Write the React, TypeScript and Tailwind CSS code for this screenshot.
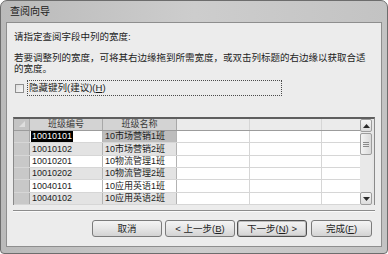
const rows = [
  { code: "10010101", name: "10市场营销1班", h: "h-[12px]", c1: "bg-white", c2: "bg-[#bdbdbd]", sel: true },
  { code: "10010102", name: "10市场营销2班", h: "h-[13px]", c1: "bg-[#e3e3e3]", c2: "bg-[#e3e3e3]", sel: false },
  { code: "10010201", name: "10物流管理1班", h: "h-[12px]", c1: "bg-white", c2: "bg-white", sel: false },
  { code: "10010202", name: "10物流管理2班", h: "h-[12px]", c1: "bg-[#e3e3e3]", c2: "bg-[#e3e3e3]", sel: false },
  { code: "10040101", name: "10应用英语1班", h: "h-[13px]", c1: "bg-white", c2: "bg-white", sel: false },
  { code: "10040102", name: "10应用英语2班", h: "h-[12px]", c1: "bg-[#e3e3e3]", c2: "bg-[#e3e3e3]", sel: false },
];

function Arrow({ up }: { up: boolean }) {
  return (
    <svg width="7" height="4" viewBox="0 0 7 4">
      <path d={up ? "M0 4 L3.5 0 L7 4 Z" : "M0 0 L3.5 4 L7 0 Z"} fill="#2a2a2a" />
    </svg>
  );
}

function Btn({ children, w, focus }: { children: React.ReactNode; w: string; focus?: boolean }) {
  return (
    <div
      className={`flex h-[17px] ${w} items-center justify-center rounded-[3px] border bg-gradient-to-b from-[#f4f4f4] via-[#e6e6e6] to-[#d3d3d3] text-[9.5px] leading-none text-[#1e1e1e] ${
        focus ? "border-[#4f4f4f] shadow-[inset_0_0_0_1px_#bcbcbc]" : "border-[#7b7b7b]"
      }`}
    >
      {children}
    </div>
  );
}

export default function App() {
  return (
    <div className="h-[254px] w-[388px] overflow-hidden bg-white font-['Liberation_Sans','Noto_Sans_CJK_SC',sans-serif] text-[#1c1c1c]">
      <div className="flex h-full flex-col rounded-t-[7px] rounded-b-[4px] border border-[#6d6d6d] bg-gradient-to-r from-[#bababa] via-[#cdcdcd] to-[#c3c3c3] px-[5px] pb-[6px]">
        <div className="flex h-[21px] items-center pl-[4px] text-[10px] text-[#202020]">查阅向导</div>

        <div className="flex flex-1 flex-col border border-[#8e8e8e] bg-[#ececec]">
          <p className="mt-[8px] pl-[7px] text-[9.5px] leading-[12px]">请指定查阅字段中列的宽度:</p>
          <p className="mt-[9px] w-[364px] pl-[7px] text-[9.5px] leading-[11px]">
            若要调整列的宽度，可将其右边缘拖到所需宽度，或双击列标题的右边缘以获取合适的宽度。
          </p>

          <div className="mt-[6px] flex items-center pl-[8px]">
            <div className="h-[9px] w-[9px] border border-[#8f8f8f] bg-gradient-to-br from-[#dedede] to-[#f8f8f8]" />
            <div className="ml-[3px] flex h-[16px] w-[255px] items-center border border-dotted border-[#4a4a4a] pl-[1px] text-[9.5px] leading-none">
              隐藏键列(建议)(<span className="underline">H</span>)
            </div>
          </div>

          <div className="mx-[6px] mt-[21px] flex h-[88px] border-x border-t-2 border-x-[#8a8a8a] border-t-[#5e5e5e] bg-white">
            <div className="w-[346px] overflow-hidden text-[9px] leading-none">
              <div className="flex h-[12px] border-b border-[#9c9c9c] text-[#3a3a3a]">
                <div className="relative w-[16px] shrink-0 border-r border-[#a5a5a5] bg-[#c4c4c4]">
                  <svg className="absolute left-[5px] top-[2px]" width="6" height="6" viewBox="0 0 6 6">
                    <path d="M6 0 L6 6 L0 6 Z" fill="#dedede" />
                  </svg>
                </div>
                <div className="flex w-[73px] shrink-0 items-center justify-center border-r border-[#a8a8a8] bg-[#d3d3d3]">班级编号</div>
                <div className="flex w-[74px] shrink-0 items-center justify-center border-r border-[#a8a8a8] bg-[#d3d3d3]">班级名称</div>
                <div className="w-[73px] shrink-0 border-r border-[#d6d6d6] bg-[#ebebeb]" />
                <div className="w-[72px] shrink-0 border-r border-[#d6d6d6] bg-[#ebebeb]" />
                <div className="flex-1 bg-[#ebebeb]" />
              </div>
              {rows.map((r) => (
                <div key={r.code} className={`flex ${r.h} border-b border-[#d6d6d6]`}>
                  <div className="w-[16px] shrink-0 border-r border-[#a5a5a5] bg-[#c8c8c8]" />
                  <div className={`flex w-[73px] shrink-0 items-center border-r border-[#b3b3b3] pl-[1px] ${r.c1}`}>
                    {r.sel ? (
                      <span className="bg-black px-[1px] py-[1px] text-white">{r.code}</span>
                    ) : (
                      <span className="px-[1px]">{r.code}</span>
                    )}
                  </div>
                  <div className={`flex w-[74px] shrink-0 items-center border-r border-[#b3b3b3] pl-[2px] ${r.c2}`}>{r.name}</div>
                  <div className="w-[73px] shrink-0 border-r border-[#d6d6d6] bg-white" />
                  <div className="w-[72px] shrink-0 border-r border-[#d6d6d6] bg-white" />
                  <div className="flex-1 bg-white" />
                </div>
              ))}
            </div>

            <div className="flex w-[12px] flex-col bg-[#e9e9e9]">
              <div className="flex h-[13px] items-center justify-center rounded-[2px] border border-[#9d9d9d] bg-gradient-to-b from-[#f5f5f5] to-[#dcdcdc]">
                <Arrow up />
              </div>
              <div className="mt-[1px] flex h-[22px] flex-col items-center justify-center gap-[1px] rounded-[2px] border border-[#9d9d9d] bg-gradient-to-r from-[#f3f3f3] to-[#dadada]">
                <div className="h-px w-[6px] bg-[#8a8a8a]" />
                <div className="h-px w-[6px] bg-[#8a8a8a]" />
                <div className="h-px w-[6px] bg-[#8a8a8a]" />
              </div>
              <div className="flex-1" />
              <div className="flex h-[13px] items-center justify-center rounded-[2px] border border-[#9d9d9d] bg-gradient-to-b from-[#f5f5f5] to-[#dcdcdc]">
                <Arrow up={false} />
              </div>
            </div>
            <div className="w-[2px] bg-[#e6e6e6]" />
          </div>

          <div className="mx-[6px] mt-[5px] h-[2px] border-t border-b border-t-[#8c8c8c] border-b-[#fafafa]" />

          <div className="mt-[8px] flex pl-[85px]">
            <Btn w="w-[70px]">取消</Btn>
            <div className="ml-[3px]">
              <Btn w="w-[70px]">
                &lt; 上一步(<span className="underline">B</span>)
              </Btn>
            </div>
            <div className="ml-[2px]">
              <Btn w="w-[70px]" focus>
                下一步(<span className="underline">N</span>) &gt;
              </Btn>
            </div>
            <div className="ml-[4px]">
              <Btn w="w-[61px]">
                完成(<span className="underline">F</span>)
              </Btn>
            </div>
          </div>
        </div>
      </div>
    </div>
  );
}
